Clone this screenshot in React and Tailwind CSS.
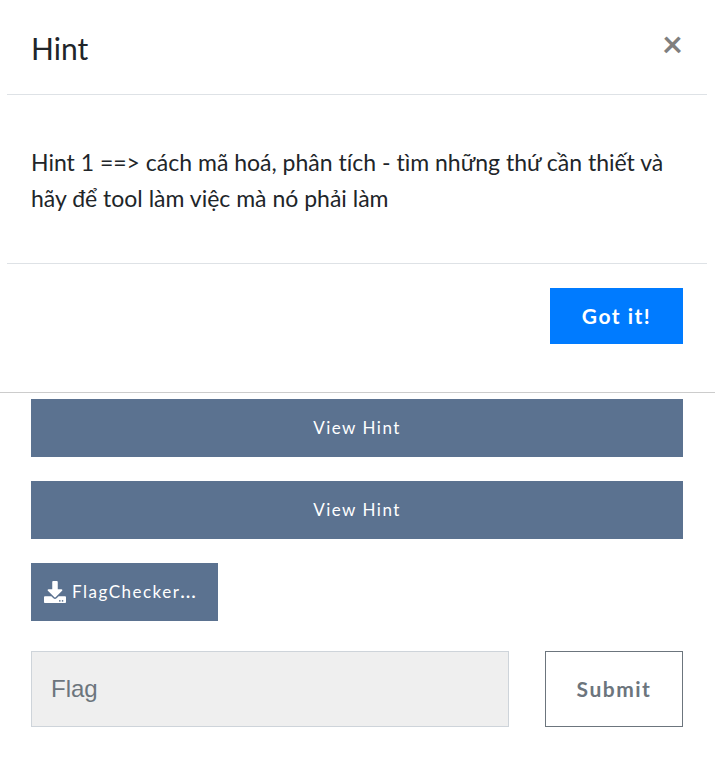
import { FaDownload } from "react-icons/fa";

const hintButton =
  "flex h-[58px] w-full items-center justify-center bg-[#5b7290] text-[17px] leading-7 tracking-[1.5px] text-white";

function HintDialog() {
  return (
    <section
      role="dialog"
      aria-labelledby="hint-title"
      className="border-b border-[#cccccc] bg-white pr-2 pb-12 pl-[7px]"
    >
      <header className="flex items-start justify-between border-b border-[#dee2e6] px-6 pt-6 pb-[22px]">
        <h1 id="hint-title" className="text-[30px] leading-[48px]">
          Hint
        </h1>
        <button
          type="button"
          aria-label="Close"
          className="text-[36px] leading-[38px] font-bold text-[#7f7f7f]"
        >
          ×
        </button>
      </header>
      <div className="border-b border-[#dee2e6] px-6 pt-[49px] pb-[47px]">
        <p className="text-[23px] leading-9 [font-variant-ligatures:no-common-ligatures]">
          Hint 1 ==&gt; cách mã hoá, phân tích - tìm những thứ cần thiết và hãy
          để tool làm việc mà nó phải làm
        </p>
      </div>
      <footer className="flex justify-end px-6 pt-6">
        <button
          type="button"
          className="h-14 w-[133px] bg-[#007bff] text-[21px] leading-8 font-bold tracking-[1.5px] text-white"
        >
          Got it!
        </button>
      </footer>
    </section>
  );
}

function Challenge() {
  return (
    <main className="pt-1.5 pr-8 pl-[31px]">
      <div className="flex flex-col items-start gap-6">
        <button type="button" className={hintButton}>
          View Hint
        </button>
        <button type="button" className={hintButton}>
          View Hint
        </button>
        <a
          href="#flagchecker"
          className="flex h-[58px] w-[187px] items-center gap-1.5 bg-[#5b7290] px-[13px] text-[17px] leading-7 tracking-[1.5px] text-white"
        >
          <FaDownload className="size-[22px] shrink-0" />
          <span>
            FlagChecker<b>...</b>
          </span>
        </a>
      </div>
      <form
        className="mt-[30px] flex gap-9"
        onSubmit={(event) => event.preventDefault()}
      >
        <input
          type="text"
          aria-label="Flag"
          placeholder="Flag"
          className="h-[76px] min-w-0 flex-1 border border-[#ced4da] bg-[#efefef] px-[19px] font-['Liberation_Sans',Arial,sans-serif] text-2xl placeholder:text-[#6c757d]"
        />
        <button
          type="submit"
          className="h-[76px] w-[138px] border border-[#6c757d] text-[21px] leading-8 font-bold tracking-[1.5px] text-[#6c757d]"
        >
          Submit
        </button>
      </form>
    </main>
  );
}

export default function App() {
  return (
    <div className="min-h-screen bg-white font-['Lato','Noto_Sans',sans-serif] text-[#212529]">
      <HintDialog />
      <Challenge />
    </div>
  );
}
